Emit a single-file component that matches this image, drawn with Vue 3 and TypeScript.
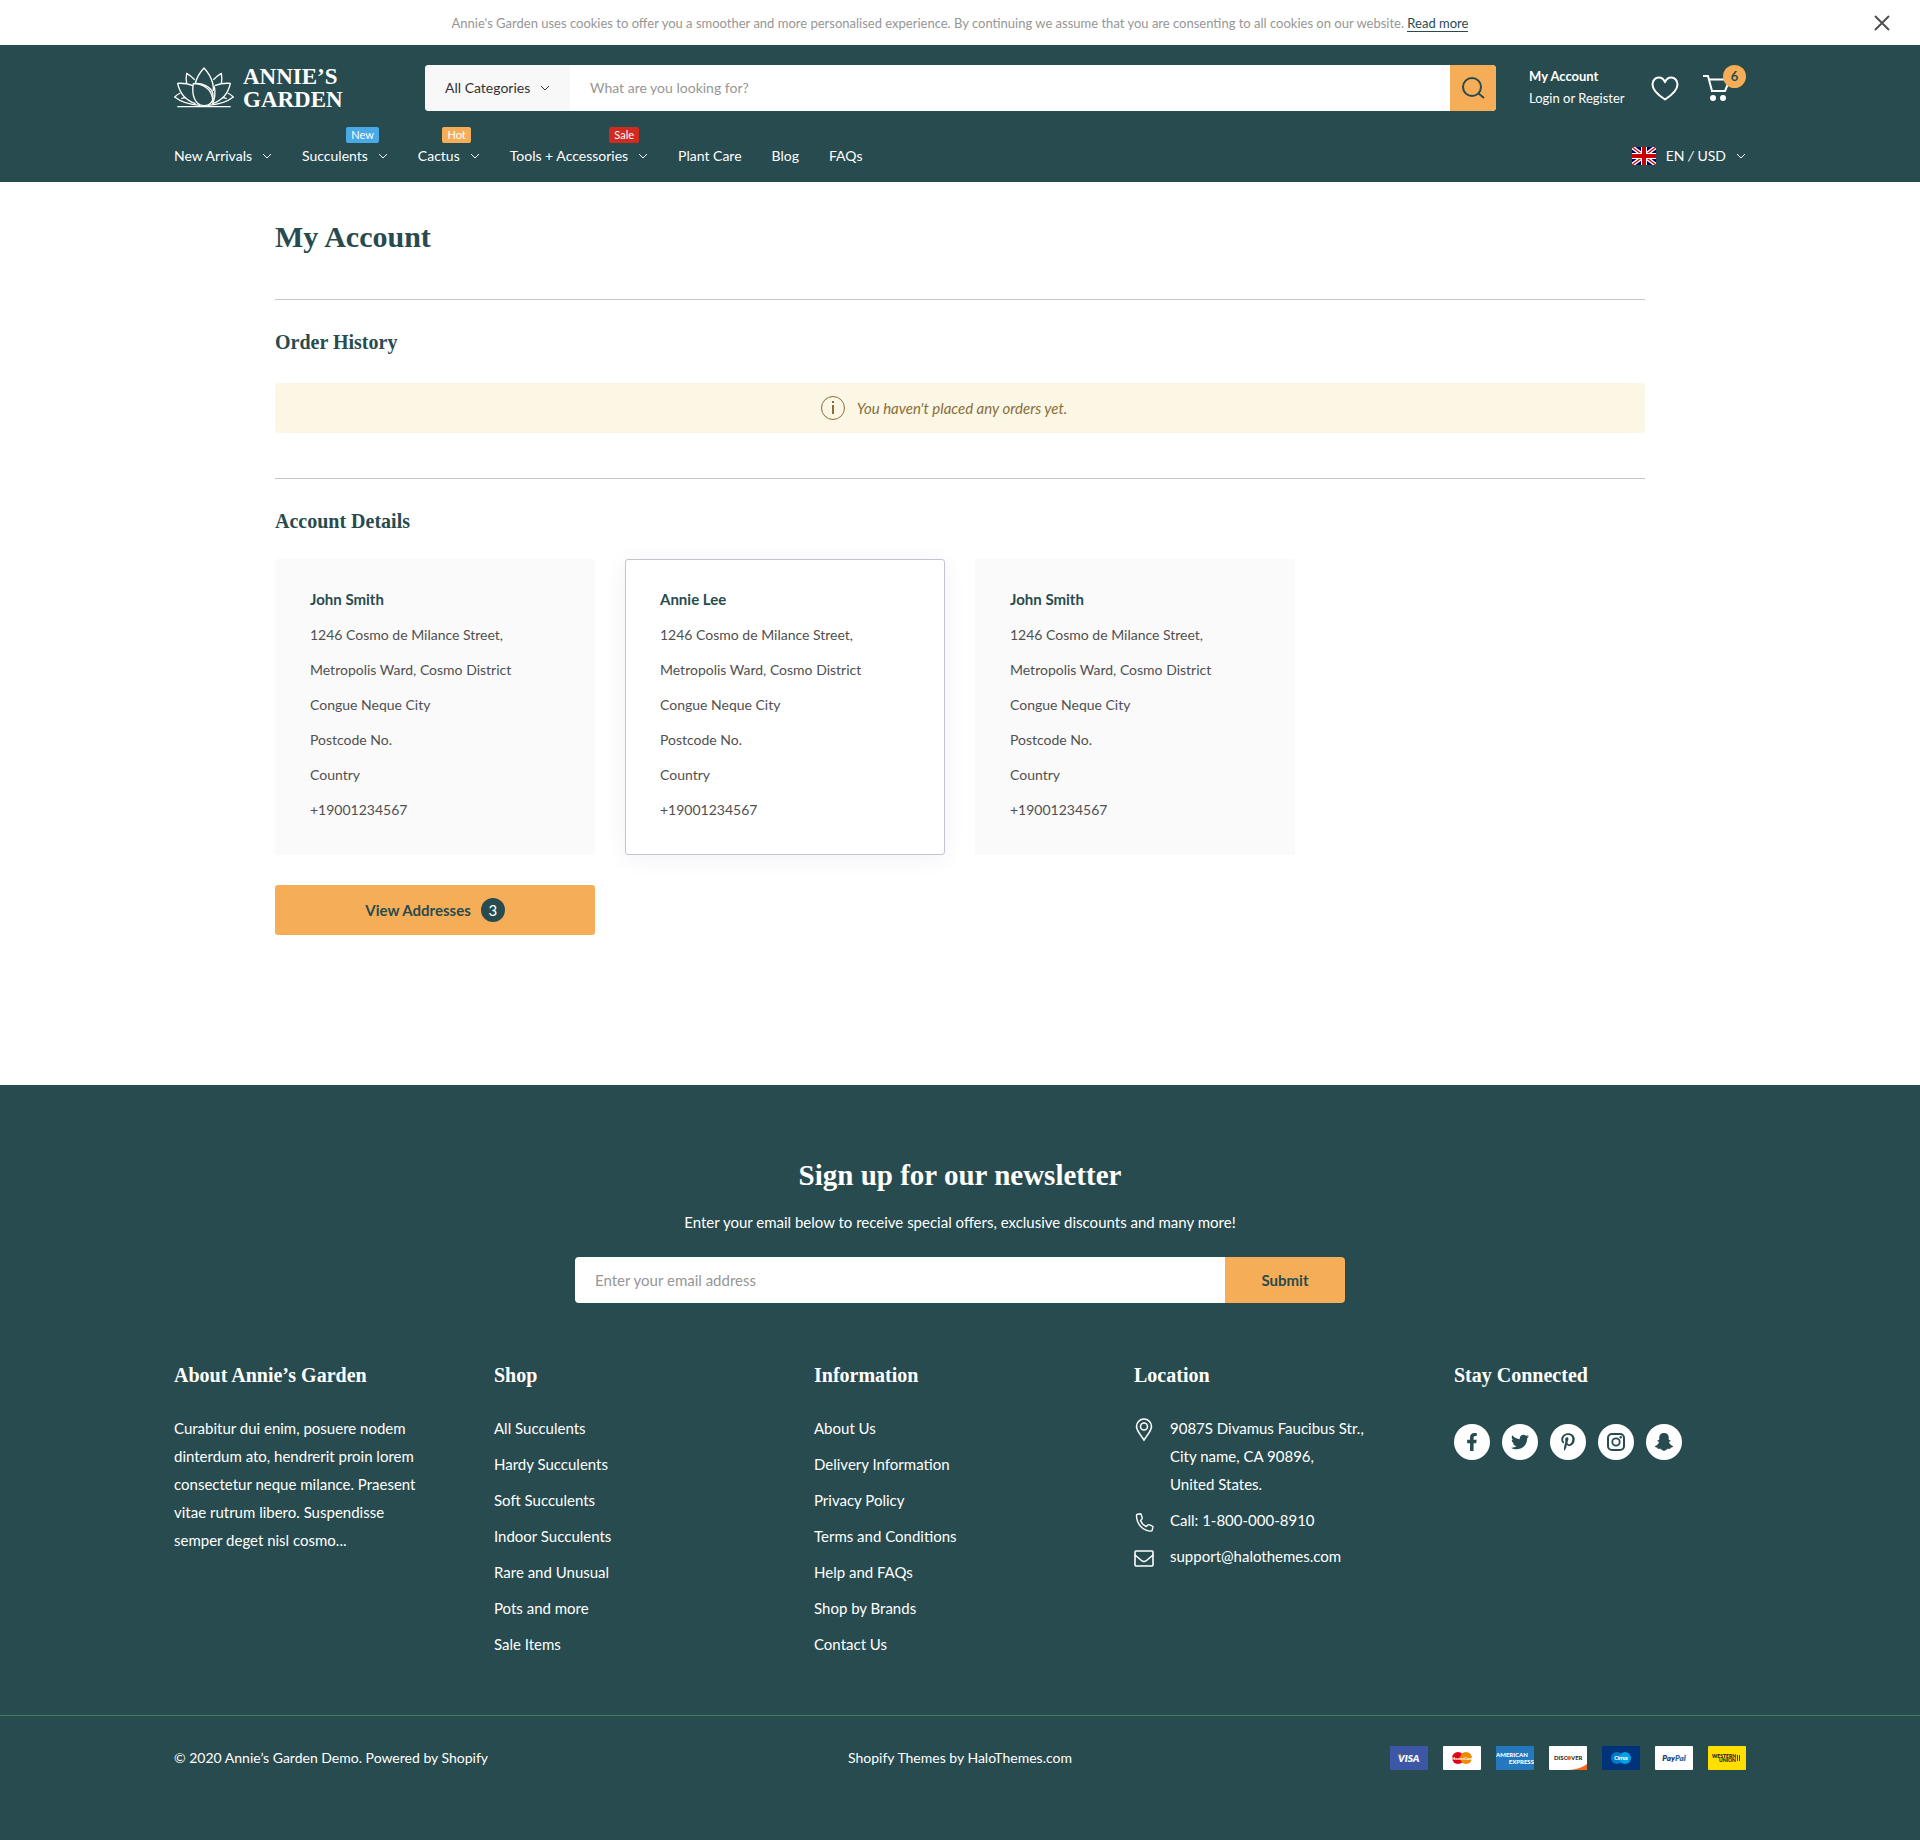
<script setup lang="ts">
import { ref } from 'vue'

interface NavItem {
  label: string
  menu?: boolean
  badge?: string
  tone?: string
}

interface Address {
  name: string
  active?: boolean
}

const nav: NavItem[] = [
  { label: 'New Arrivals', menu: true },
  { label: 'Succulents', menu: true, badge: 'New', tone: 'blue' },
  { label: 'Cactus', menu: true, badge: 'Hot', tone: 'orange' },
  { label: 'Tools + Accessories', menu: true, badge: 'Sale', tone: 'red' },
  { label: 'Plant Care' },
  { label: 'Blog' },
  { label: 'FAQs' },
]

const addresses: Address[] = [
  { name: 'John Smith' },
  { name: 'Annie Lee', active: true },
  { name: 'John Smith' },
]

const addressLines: string[] = [
  '1246 Cosmo de Milance Street,',
  'Metropolis Ward, Cosmo District',
  'Congue Neque City',
  'Postcode No.',
  'Country',
  '+19001234567',
]

const linkColumns: { title: string; links: string[] }[] = [
  {
    title: 'Shop',
    links: ['All Succulents', 'Hardy Succulents', 'Soft Succulents', 'Indoor Succulents', 'Rare and Unusual', 'Pots and more', 'Sale Items'],
  },
  {
    title: 'Information',
    links: ['About Us', 'Delivery Information', 'Privacy Policy', 'Terms and Conditions', 'Help and FAQs', 'Shop by Brands', 'Contact Us'],
  },
]

const query = ref('')
const email = ref('')
const showNotice = ref(true)
</script>

<template>
  <div class="page">
    <div v-if="showNotice" class="notice">
      <p>Annie's Garden uses cookies to offer you a smoother and more personalised experience. By continuing we assume that you are consenting to all cookies on our website. <a href="#">Read more</a></p>
      <button class="close" type="button" aria-label="Close" @click="showNotice = false">
        <svg width="16" height="16" viewBox="0 0 16 16"><path d="M1 1l14 14M15 1L1 15" fill="none" stroke="#505050" stroke-width="2" /></svg>
      </button>
    </div>

    <header class="header">
      <div class="container">
        <div class="top-row">
          <a href="#" class="logo">
            <svg width="60" height="42" viewBox="0 0 180 126" fill="none" stroke="#fff" stroke-width="4" stroke-linejoin="round">
              <path d="M64 48C69 30 78 16 90 3c12 13 21 27 26 45 2 8 3 16 2 24" />
              <path d="M58 50c-6 34 5 64 31 66 24 0 31-18 27-38C112 61 84 45 58 50z" />
              <path d="M62 38c-8-8-15-14-24-19-2 11-2 21 0 31M118 38c8-8 15-14 24-19 2 11 2 21 0 31" />
              <path d="M57 56C42 50 28 48 11 49c6 29 24 51 54 61M122 56c15-6 30-8 47-7-6 29-24 51-54 61" />
              <path d="M60 50C90 52 118 65 117 112M121 58c4 22 1 40-6 53" />
              <path d="M19 78C12 81 7 85 2 90c19 15 44 23 76 25M161 78c7 3 12 7 17 12-19 15-44 23-76 25" />
              <path d="M36 92c-5 0-10 1-14 3M144 92c5 0 10 1 14 3M10 119h160" />
            </svg>
            <span class="wordmark">ANNIE’S<br />GARDEN</span>
          </a>

          <form class="search" role="search" @submit.prevent>
            <span class="category">
              <select aria-label="Category"><option>All Categories</option></select>
              <svg class="chevron" width="10" height="6" viewBox="0 0 10 6"><path d="M1 1l4 4 4-4" /></svg>
            </span>
            <input v-model="query" type="search" aria-label="Search" placeholder="What are you looking for?" />
            <button type="submit" aria-label="Search">
              <svg width="24" height="22" viewBox="0 0 24 22" fill="none" stroke="#284b4f" stroke-width="2"><circle cx="11" cy="10" r="9" /><path d="M17 16l6 5" /></svg>
            </button>
          </form>

          <div class="account">
            <a href="#" class="strong">My Account</a>
            <span><a href="#">Login</a> or <a href="#">Register</a></span>
          </div>
          <a href="#" class="wishlist" aria-label="Wish list">
            <svg width="28" height="25" viewBox="0 0 28 25"><path d="M14 23.500C7 19 1.500 14.500 1.500 8.500c0-4 2.800-7 6.200-7 2.800 0 5 1.500 6.300 4.700 1.300-3.200 3.500-4.700 6.300-4.700 3.400 0 6.200 3 6.200 7 0 6-5.500 10.500-12.500 15z" fill="none" stroke="#fff" stroke-width="2" stroke-linejoin="round" /></svg>
          </a>
          <a href="#" class="cart" aria-label="Cart">
            <svg width="28" height="28" viewBox="0 0 28 28"><path d="M0 2h5l4 15h13l5-12M6 5.500h20" fill="none" stroke="#fff" stroke-width="2" /><circle cx="10" cy="24" r="3" fill="#fff" /><circle cx="20" cy="24" r="3" fill="#fff" /></svg>
            <span class="count">6</span>
          </a>
        </div>

        <div class="nav-row">
          <nav>
            <a v-for="item in nav" :key="item.label" href="#">
              {{ item.label }}
              <svg v-if="item.menu" class="chevron" width="10" height="6" viewBox="0 0 10 6"><path d="M1 1l4 4 4-4" /></svg>
              <span v-if="item.badge" class="badge" :class="item.tone">{{ item.badge }}</span>
            </a>
          </nav>
          <button type="button" class="locale">
            <svg width="24" height="18" viewBox="0 0 24 18">
              <path fill="#006" d="M0 0h24v18H0z" />
              <path d="M0 0l24 18M24 0L0 18" stroke="#fff" stroke-width="4" />
              <path d="M0 0l24 18M24 0L0 18" stroke="#c00" stroke-width="1.300" />
              <path d="M12 0v18M0 9h24" stroke="#fff" stroke-width="6" />
              <path d="M12 0v18M0 9h24" stroke="#c00" stroke-width="4" />
            </svg>
            <span>EN <i>/</i> USD</span>
            <svg class="chevron" width="10" height="6" viewBox="0 0 10 6"><path d="M1 1l4 4 4-4" /></svg>
          </button>
        </div>
      </div>
    </header>

    <main class="main">
      <h1>My Account</h1>
      <section>
        <h2>Order History</h2>
        <p class="alert">
          <svg width="24" height="24" viewBox="0 0 24 24"><circle cx="12" cy="12" r="11.500" fill="none" stroke="#8a6d3b" /><path d="M12 5v2M12 9v9" stroke="#8a6d3b" stroke-width="2" /></svg>
          <em>You haven't placed any orders yet.</em>
        </p>
      </section>
      <section>
        <h2>Account Details</h2>
        <div class="cards">
          <address v-for="(card, i) in addresses" :key="i" class="card" :class="{ active: card.active }">
            <strong>{{ card.name }}</strong>
            <span v-for="line in addressLines" :key="line">{{ line }}</span>
          </address>
        </div>
        <button type="button" class="view">View Addresses <span>3</span></button>
      </section>
    </main>

    <footer class="footer">
      <section class="newsletter">
        <h2>Sign up for our newsletter</h2>
        <p>Enter your email below to receive special offers, exclusive discounts and many more!</p>
        <form @submit.prevent>
          <input v-model="email" type="email" aria-label="Email address" placeholder="Enter your email address" />
          <button type="submit">Submit</button>
        </form>
      </section>

      <div class="container columns">
        <section>
          <h3>About Annie’s Garden</h3>
          <p>Curabitur dui enim, posuere nodem<br />dinterdum ato, hendrerit proin lorem<br />consectetur neque milance. Praesent<br />vitae rutrum libero. Suspendisse<br />semper deget nisl cosmo...</p>
        </section>
        <section v-for="column in linkColumns" :key="column.title">
          <h3>{{ column.title }}</h3>
          <ul class="links">
            <li v-for="link in column.links" :key="link"><a href="#">{{ link }}</a></li>
          </ul>
        </section>
        <section>
          <h3>Location</h3>
          <ul class="contact">
            <li>
              <svg width="20" height="24" viewBox="0 0 20 24" fill="none" stroke="#fff" stroke-width="1.600"><path d="M10 22C6 16 2.500 12.500 2.500 8.500a7.500 7.500 0 0 1 15 0C17.500 12.500 14 16 10 22z" /><circle cx="10" cy="8.500" r="3.500" /></svg>
              <span>9087S Divamus Faucibus Str.,<br />City name, CA 90896,<br />United States.</span>
            </li>
            <li>
              <svg width="20" height="24" viewBox="0 0 20 24" fill="none" stroke="#fff" stroke-width="1.400" stroke-linejoin="round"><path d="M3 4.500l3-.7c.6 0 1 .2 1.200.7l1 3.500c.1.500 0 .8-.4 1.200L6.500 10.500c1 2.800 3 4.800 5.800 6l1.500-1.500c.4-.4.8-.5 1.200-.3l3.300 1.500c.5.200.7.600.6 1.200l-.8 3c-.1.500-.5.700-1 .700C9 21 2.500 14 2.500 5.500c0-.5 0-.8.500-1z" /></svg>
              <span>Call: 1-800-000-8910</span>
            </li>
            <li>
              <svg width="20" height="24" viewBox="0 0 20 24" fill="none" stroke="#fff" stroke-width="1.600" stroke-linejoin="round"><rect x="1" y="5" width="18" height="15" rx="1" /><path d="M1 9l6.500 5.500q2.500 2 5 0L19 9" /></svg>
              <a href="#">support@halothemes.com</a>
            </li>
          </ul>
        </section>
        <section>
          <h3>Stay Connected</h3>
          <div class="social">
            <a href="#" aria-label="Facebook"><svg width="18" height="18" viewBox="-96 0 512 512"><path d="M279.140 288l14.220-92.660h-88.910v-60.130c0-25.350 12.420-50.060 52.240-50.060h40.420V6.260S260.430 0 225.360 0c-73.220 0-121.080 44.380-121.080 124.720v70.620H22.890V288h81.390v224h100.170V288z" /></svg></a>
            <a href="#" aria-label="Twitter"><svg width="18" height="18" viewBox="0 0 512 512"><path d="M459.370 151.716c.325 4.548.325 9.097.325 13.645 0 138.720-105.583 298.558-298.558 298.558-59.452 0-114.680-17.219-161.137-47.106 8.447.974 16.568 1.299 25.340 1.299 49.055 0 94.213-16.568 130.274-44.832-46.132-.975-84.792-31.188-98.112-72.772 6.498.974 12.995 1.624 19.818 1.624 9.421 0 18.843-1.300 27.614-3.573-48.081-9.747-84.143-51.980-84.143-102.985v-1.299c13.969 7.797 30.214 12.670 47.431 13.319-28.264-18.843-46.781-51.005-46.781-87.391 0-19.492 5.197-37.360 14.294-52.954 51.655 63.675 129.300 105.258 216.365 109.807-1.624-7.797-2.599-15.918-2.599-24.040 0-57.828 46.782-104.934 104.934-104.934 30.213 0 57.502 12.670 76.670 33.137 23.715-4.548 46.456-13.320 66.599-25.340-7.798 24.366-24.366 44.833-46.132 57.827 21.117-2.273 41.584-8.122 60.426-16.243-14.292 20.791-32.161 39.308-52.628 54.253z" /></svg></a>
            <a href="#" aria-label="Pinterest"><svg width="18" height="18" viewBox="-64 0 512 512"><path d="M204 6.500C101.400 6.500 0 74.900 0 185.600 0 256 39.600 296 63.600 296c9.900 0 15.600-27.600 15.600-35.400 0-9.300-23.700-29.100-23.700-67.800 0-80.400 61.200-137.400 140.400-137.400 68.100 0 118.500 38.700 118.500 109.800 0 53.100-21.300 152.700-90.300 152.700-24.900 0-46.200-18-46.200-43.800 0-37.800 26.400-74.400 26.400-113.400 0-66.200-93.900-54.200-93.900 25.800 0 16.800 2.100 35.400 9.600 50.700-13.800 59.400-42 147.900-42 209.100 0 18.900 2.700 37.500 4.500 56.400 3.400 3.800 1.700 3.400 6.900 1.500 50.400-69 48.600-82.500 71.400-172.800 12.300 23.400 44.100 36 69.300 36 106.200 0 153.900-103.500 153.900-196.800C384 71.300 298.200 6.500 204 6.500z" /></svg></a>
            <a href="#" aria-label="Instagram"><svg width="18" height="18" viewBox="0 0 18 18"><rect x="1" y="1" width="16" height="16" rx="4" fill="none" stroke="#284b4f" stroke-width="2" /><circle cx="9" cy="9" r="3.700" fill="none" stroke="#284b4f" stroke-width="1.800" /><circle cx="13.700" cy="4.300" r="1.200" /></svg></a>
            <a href="#" aria-label="Snapchat"><svg width="20" height="18" viewBox="0 0 20 18"><path d="M10 0c3 0 4.800 2 4.800 4.700v2.200c.8.200 1.400 0 1.700.500.300.8-.8 1.200-1.600 1.600.7 2 2.200 3.500 4.100 4 .5.800-.9 1.400-2.500 1.700-.3.600-.1 1.100-.7 1.200-1 0-1.900-.3-2.800.3-1 .8-1.800 1.500-3 1.500s-2-.7-3-1.500c-.9-.6-1.800-.3-2.800-.3-.6-.1-.4-.6-.7-1.200-1.600-.3-3-.9-2.500-1.700 1.900-.5 3.400-2 4.100-4-.8-.4-1.900-.8-1.600-1.600.3-.5.900-.3 1.700-.5V4.700C5.200 2 7 0 10 0z" /></svg></a>
          </div>
        </section>
      </div>

      <div class="bottom">
        <div class="container legal">
          <span>© 2020 Annie’s Garden Demo. Powered by Shopify</span>
          <span>Shopify Themes by <a href="#">HaloThemes.com</a></span>
          <div class="payments">
            <svg viewBox="0 0 38 24"><rect width="38" height="24" rx="1" fill="#3b57a6" /><text x="8" y="16" font-size="10" font-weight="800" font-style="italic" fill="#fff">VISA</text><path d="M8 8.500h3l1 4z" fill="#f5ae57" /></svg>
            <svg viewBox="0 0 38 24"><rect width="38" height="24" rx="1" fill="#fff" /><circle cx="15" cy="12" r="6" fill="#e2001a" /><circle cx="23" cy="12" r="6" fill="#f28a00" /><text x="19" y="14" font-size="4" font-weight="800" text-anchor="middle" fill="#fff">MasterCard</text></svg>
            <svg viewBox="0 0 38 24"><rect width="38" height="24" rx="1" fill="#2478be" /><text x="0" y="11" font-size="6" font-weight="900" fill="#fff">AMERICAN</text><text x="38" y="18" font-size="6" font-weight="900" text-anchor="end" fill="#fff">EXPRESS</text></svg>
            <svg viewBox="0 0 38 24"><rect width="38" height="24" rx="1" fill="#fff" /><path d="M20 24q12-1 18-6v6z" fill="#f26a21" /><text x="5" y="14" font-size="6" font-weight="700" fill="#222">DISC</text><circle cx="20" cy="12" r="2" fill="#f26a21" /><text x="22" y="14" font-size="6" font-weight="700" fill="#222">VER</text></svg>
            <svg viewBox="0 0 38 24"><rect width="38" height="24" rx="1" fill="#00337a" /><circle cx="15" cy="12" r="6" fill="#0079c8" /><circle cx="23" cy="12" r="6" fill="#00a1e4" /><text x="19" y="14" font-size="5" font-weight="800" text-anchor="middle" fill="#fff">Cirrus</text></svg>
            <svg viewBox="0 0 38 24"><rect width="38" height="24" rx="1" fill="#fff" /><text x="19" y="15" font-size="8" font-weight="800" font-style="italic" text-anchor="middle" fill="#1f3667">Pay<tspan fill="#246ba6">Pal</tspan></text></svg>
            <svg viewBox="0 0 38 24"><rect width="38" height="24" rx="1" fill="#ffdf00" /><text x="28" y="12" font-size="5" font-weight="900" text-anchor="end" fill="#111">WESTERN</text><text x="28" y="16" font-size="5" font-weight="900" text-anchor="end" fill="#111">UNION</text><path d="M29.500 9v6M31.500 9v6" stroke="#111" stroke-width=".8" /></svg>
          </div>
        </div>
      </div>
    </footer>
  </div>
</template>

<style>
body {
  background: #fff;
}
</style>

<style scoped>
* {
  box-sizing: border-box;
}

.page {
  display: flex;
  flex-direction: column;
  min-height: 100vh;
  font-family: Lato, "Liberation Sans", sans-serif;
  font-size: 15px;
  line-height: 28px;
  color: #505050;
}

a {
  color: inherit;
  text-decoration: none;
}

h1,
h2,
h3,
p,
ul {
  margin: 0;
  padding: 0;
}

ul {
  list-style: none;
}

button,
input,
select {
  font: inherit;
  border: 0;
  border-radius: 0;
  margin: 0;
  padding: 0;
  background: none;
  color: inherit;
}

input {
  appearance: none;
  min-width: 0;
}

input::placeholder {
  color: #969696;
  opacity: 1;
}

h1,
h2,
h3 {
  font-family: "Liberation Serif", serif;
  font-weight: 700;
  color: #284b4f;
}

.container {
  width: 100%;
  max-width: 1612px;
  margin: 0 auto;
  padding: 0 20px;
}

.chevron {
  flex: none;
  fill: none;
  stroke: currentColor;
}

.notice {
  display: flex;
  align-items: center;
  padding: 0 30px 0 46px;
  min-height: 45px;
  font-size: 13px;
  line-height: 20px;
  color: #969696;
}

.notice p {
  flex: 1;
  text-align: center;
}

.notice a {
  color: #284b4f;
  border-bottom: 1px solid #284b4f;
}

.close {
  display: flex;
  cursor: pointer;
}

.header {
  padding: 20px 0 12px;
  background: #284b4f;
  color: #fff;
  font-size: 14px;
}

.top-row {
  display: flex;
  align-items: center;
}

.logo {
  display: flex;
  align-items: center;
  gap: 9px;
  flex: 0 0 251px;
}

.wordmark {
  font-family: "Liberation Serif", serif;
  font-size: 23px;
  font-weight: 700;
  line-height: 23px;
}

.search {
  display: flex;
  flex: 1;
  height: 46px;
  overflow: hidden;
  border-radius: 4px;
  background: #fff;
}

.category {
  display: flex;
  align-items: center;
  gap: 8px;
  width: 145px;
  padding: 0 20px;
  background: #f8f8f8;
  color: #323232;
}

.category select {
  flex: 1;
  min-width: 0;
  height: 46px;
  appearance: none;
}

.search input {
  flex: 1;
  padding: 0 20px;
}

.search button {
  display: flex;
  align-items: center;
  justify-content: center;
  width: 46px;
  background: #f5ae57;
}

.account {
  display: flex;
  flex-direction: column;
  width: 94px;
  margin-left: 33px;
  padding-bottom: 2px;
  font-size: 13px;
  line-height: 22px;
  white-space: nowrap;
}

.strong {
  font-weight: 700;
}

.wishlist {
  display: flex;
  margin-left: 28px;
}

.cart {
  position: relative;
  display: flex;
  align-items: flex-end;
  width: 43px;
  height: 46px;
  margin-left: 24px;
  padding-bottom: 9px;
}

.count {
  position: absolute;
  top: 0;
  right: 0;
  width: 23px;
  height: 23px;
  border-radius: 50%;
  background: #f5ae57;
  color: #284b4f;
  font-size: 13px;
  font-weight: 700;
  line-height: 23px;
  text-align: center;
}

.nav-row {
  display: flex;
  justify-content: space-between;
  margin-top: 31px;
}

nav {
  display: flex;
  flex-wrap: wrap;
  gap: 0 30px;
}

nav a {
  position: relative;
  display: flex;
  align-items: center;
  gap: 10px;
}

.badge {
  position: absolute;
  top: -15px;
  right: 9px;
  padding: 0 5px;
  border-radius: 2px;
  color: #fff;
  font-size: 11px;
  line-height: 16px;
}

.blue {
  background: #4aaae8;
}

.orange {
  background: #f5ae57;
}

.red {
  background: #d12a1e;
}

.locale {
  display: flex;
  align-items: center;
  gap: 10px;
}

.main {
  width: 100%;
  max-width: 1410px;
  margin: 0 auto;
  padding: 35px 20px 150px;
}

h1 {
  padding-bottom: 42px;
  font-size: 30px;
  line-height: 40px;
}

.main section {
  padding: 28px 0 45px;
  border-top: 1px solid #c4c6ca;
}

.main section:last-child {
  padding-bottom: 0;
}

.main h2 {
  margin-bottom: 27px;
  font-size: 20px;
  line-height: 28px;
}

.main section:last-child h2 {
  margin-bottom: 24px;
}

.alert {
  display: flex;
  align-items: center;
  justify-content: center;
  gap: 12px;
  min-height: 50px;
  padding-right: 32px;
  border-radius: 4px;
  background: #fbf7e4;
  color: #8a6d3b;
}

.cards {
  display: grid;
  grid-template-columns: repeat(auto-fill, 320px);
  gap: 30px;
  margin-bottom: 30px;
}

.card {
  display: flex;
  flex-direction: column;
  padding: 22px 34px 27px;
  border: 1px solid #fafafa;
  border-radius: 3px;
  background: #fafafa;
  font-size: 14px;
  font-style: normal;
  line-height: 35px;
}

.card strong {
  color: #284b4f;
  font-size: 15px;
}

.card.active {
  border-color: #c4c4cf;
  background: #fff;
  box-shadow: 0 3px 24px rgba(0, 0, 0, 0.06);
}

.view {
  display: flex;
  align-items: center;
  justify-content: center;
  gap: 10px;
  width: 320px;
  height: 50px;
  border-radius: 3px;
  background: #f5ae57;
  color: #284b4f;
  font-weight: 700;
}

.view span {
  width: 24px;
  height: 24px;
  border-radius: 50%;
  background: #284b4f;
  color: #fff;
  font-weight: 400;
  line-height: 24px;
}

.footer {
  flex: 1;
  background: #284b4f;
  color: #fff;
}

.newsletter {
  max-width: 810px;
  margin: 0 auto;
  padding: 70px 20px 58px;
  text-align: center;
}

.newsletter h2 {
  margin-bottom: 13px;
  font-size: 29px;
  line-height: 40px;
  color: #fff;
}

.newsletter form {
  display: flex;
  height: 46px;
  margin-top: 21px;
  overflow: hidden;
  border-radius: 4px;
}

.newsletter input {
  flex: 1;
  padding: 0 20px;
  background: #fff;
  color: #505050;
}

.newsletter button {
  width: 120px;
  background: #f5ae57;
  color: #284b4f;
  font-weight: 700;
}

.columns {
  display: grid;
  grid-template-columns: repeat(auto-fill, minmax(280px, 1fr));
  gap: 30px 28px;
}

.columns h3 {
  margin-bottom: 25px;
  font-size: 20px;
  line-height: 28px;
  color: #fff;
}

.links {
  display: flex;
  flex-direction: column;
  gap: 8px;
}

.contact {
  display: flex;
  flex-direction: column;
  gap: 8px;
}

.contact li {
  display: flex;
  gap: 16px;
}

.contact svg {
  flex: none;
  margin-top: 4px;
}

.social {
  display: flex;
  gap: 12px;
  padding-top: 10px;
}

.social a {
  display: flex;
  align-items: center;
  justify-content: center;
  width: 36px;
  height: 36px;
  border-radius: 50%;
  background: #fff;
  fill: #284b4f;
}

.bottom {
  margin-top: 57px;
  padding: 28px 0 68px;
  border-top: 1px solid #467d5b;
  font-size: 14px;
}

.legal {
  display: grid;
  grid-template-columns: 1fr auto 1fr;
  align-items: center;
  gap: 20px;
}

.payments {
  display: flex;
  justify-content: flex-end;
  gap: 15px;
}

.payments svg {
  width: 38px;
  height: 24px;
}
</style>
